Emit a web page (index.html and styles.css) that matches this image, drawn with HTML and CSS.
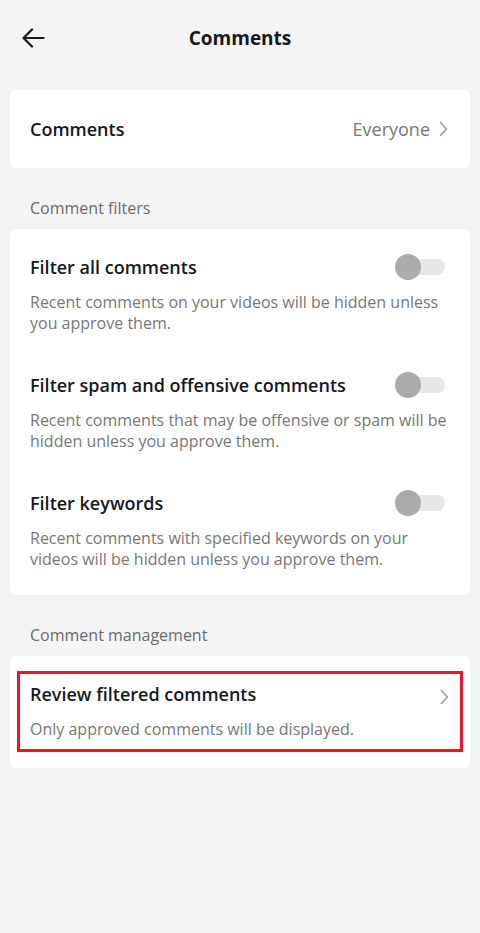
FILE: index.html
```html
<!DOCTYPE html>
<html>
<head>
<meta charset="utf-8">
<link rel="stylesheet" href="styles.css">
</head>
<body>
<div class="page">
  <header class="topbar">
    <svg class="back" width="24" height="20" viewBox="0 0 24 20"><path d="M22.5 10H2.5M11 1.5L2.5 10L11 18.5" fill="none" stroke="#161823" stroke-width="2.2" stroke-linecap="round" stroke-linejoin="round"/></svg>
    <h1 class="title">Comments</h1>
  </header>

  <section class="card card-simple">
    <span class="row-title">Comments</span>
    <span class="value">Everyone
      <svg class="chev" width="9" height="16" viewBox="0 0 9 16"><path d="M1.5 1.5L7.5 8L1.5 14.5" fill="none" stroke="#9b9b9b" stroke-width="1.6" stroke-linecap="round" stroke-linejoin="round"/></svg>
    </span>
  </section>

  <div class="section-label">Comment filters</div>
  <section class="card card-list">
    <div class="item">
      <div class="item-head">
        <span class="row-title">Filter all comments</span>
        <span class="toggle"><span class="knob"></span></span>
      </div>
      <p class="desc">Recent comments on your videos will be hidden unless you approve them.</p>
    </div>
    <div class="item">
      <div class="item-head">
        <span class="row-title">Filter spam and offensive comments</span>
        <span class="toggle"><span class="knob"></span></span>
      </div>
      <p class="desc">Recent comments that may be offensive or spam will be hidden unless you approve them.</p>
    </div>
    <div class="item">
      <div class="item-head">
        <span class="row-title">Filter keywords</span>
        <span class="toggle"><span class="knob"></span></span>
      </div>
      <p class="desc">Recent comments with specified keywords on your videos will be hidden unless you approve them.</p>
    </div>
  </section>

  <div class="section-label">Comment management</div>
  <section class="card card-manage">
    <div class="highlight">
      <div class="item-head">
        <span class="row-title">Review filtered comments</span>
        <svg class="chev chev-low" width="9" height="16" viewBox="0 0 9 16"><path d="M1.5 1.5L7.5 8L1.5 14.5" fill="none" stroke="#9b9b9b" stroke-width="1.6" stroke-linecap="round" stroke-linejoin="round"/></svg>
      </div>
      <p class="desc">Only approved comments will be displayed.</p>
    </div>
  </section>
</div>
</body>
</html>
```
FILE: styles.css
```css
html, body {
  margin: 0;
  padding: 0;
  background: #f4f4f4;
}
body {
  font-family: "Open Sans", "Liberation Sans", sans-serif;
  color: #161823;
  width: 480px;
  height: 933px;
}
.page {
  display: flex;
  flex-direction: column;
  padding: 0 10px;
}
.topbar {
  height: 76px;
  display: flex;
  align-items: center;
  justify-content: center;
  position: relative;
  margin: 0 -10px 14px;
}
.back {
  position: absolute;
  left: 21px;
  top: 28px;
}
.title {
  margin: 0;
  font-size: 19px;
  font-weight: 700;
  line-height: 24px;
}
.card {
  background: #fff;
  border-radius: 6px;
}
.card-simple {
  height: 78px;
  display: flex;
  align-items: center;
  justify-content: space-between;
  padding: 0 22px 0 20px;
}
.row-title {
  font-size: 18px;
  font-weight: 600;
  line-height: 22px;
}
.value {
  display: flex;
  align-items: center;
  gap: 9px;
  font-size: 18px;
  color: #777;
}
.section-label {
  margin: 30px 0 11px;
  padding-left: 20px;
  font-size: 16px;
  line-height: 20px;
  color: #6b6b6b;
}
.card-list {
  padding: 25px 20px 25px;
  display: flex;
  flex-direction: column;
  gap: 38px;
}
.item-head {
  display: flex;
  align-items: center;
  justify-content: space-between;
}
.desc {
  margin: 12px 0 0;
  font-size: 16px;
  line-height: 21px;
  color: #777;
}
.toggle {
  width: 50px;
  height: 26px;
  position: relative;
  display: block;
  margin-right: 5px;
}
.toggle::before {
  content: "";
  position: absolute;
  left: 4px;
  right: 0;
  top: 5px;
  height: 16px;
  border-radius: 8px;
  background: #e7e7e7;
}
.knob {
  position: absolute;
  left: 0;
  top: 0;
  width: 26px;
  height: 26px;
  border-radius: 50%;
  background: #ababab;
}
.card-manage {
  padding: 15px 7px 16px;
}
.highlight {
  border: 3px solid #e8172c;
  padding: 9px 11px 9px 10px;
}
.highlight .desc {
  margin-top: 14px;
}
.chev-low {
  margin-top: 6px;
}
```
